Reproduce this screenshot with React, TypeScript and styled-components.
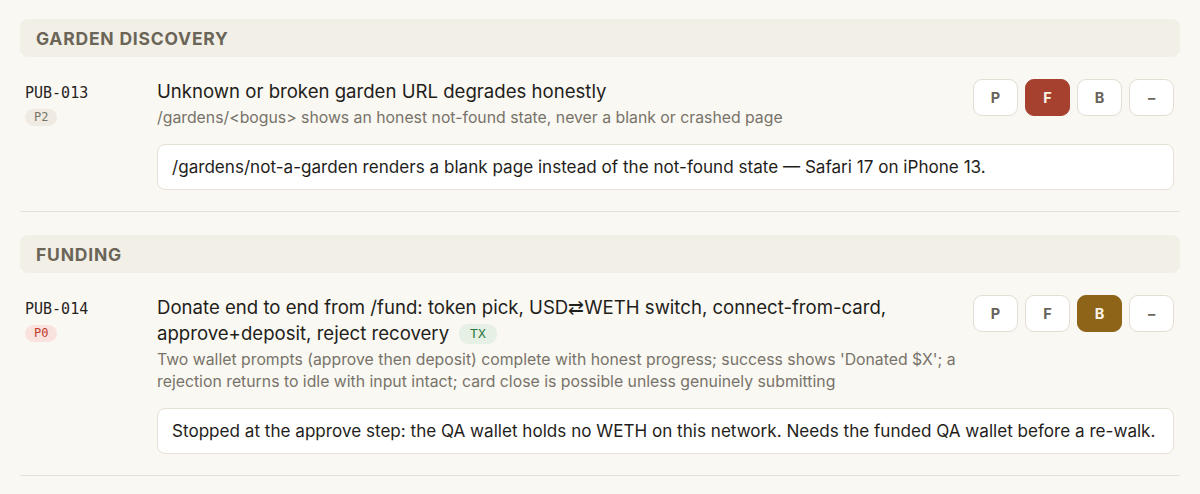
import styled, { createGlobalStyle } from 'styled-components';

type Verdict = 'P' | 'F' | 'B' | '–';

type Check = {
  id: string;
  priority: string;
  title: string;
  tag?: string;
  description: string;
  note: string;
  verdict: Verdict;
};

type Group = {
  name: string;
  checks: Check[];
};

const groups: Group[] = [
  {
    name: 'Garden Discovery',
    checks: [
      {
        id: 'PUB-013',
        priority: 'P2',
        title: 'Unknown or broken garden URL degrades honestly',
        description: '/gardens/<bogus> shows an honest not-found state, never a blank or crashed page',
        note: '/gardens/not-a-garden renders a blank page instead of the not-found state — Safari 17 on iPhone 13.',
        verdict: 'F',
      },
    ],
  },
  {
    name: 'Funding',
    checks: [
      {
        id: 'PUB-014',
        priority: 'P0',
        title:
          'Donate end to end from /fund: token pick, USD⇄WETH switch, connect-from-card, approve+deposit, reject recovery',
        tag: 'TX',
        description:
          "Two wallet prompts (approve then deposit) complete with honest progress; success shows 'Donated $X'; a rejection returns to idle with input intact; card close is possible unless genuinely submitting",
        note: 'Stopped at the approve step: the QA wallet holds no WETH on this network. Needs the funded QA wallet before a re-walk.',
        verdict: 'B',
      },
    ],
  },
];

const verdicts: Verdict[] = ['P', 'F', 'B', '–'];

export default function App() {
  return (
    <>
      <GlobalStyle />
      <Page>
        {groups.map((group) => (
          <Section key={group.name}>
            <SectionHeader>{group.name}</SectionHeader>
            {group.checks.map((check) => (
              <Row key={check.id}>
                <IdColumn>
                  <CheckId>{check.id}</CheckId>
                  <Priority $level={check.priority}>{check.priority}</Priority>
                </IdColumn>
                <Body>
                  <Top>
                    <Texts>
                      <Title>
                        {check.title}
                        {check.tag && <Tag>{check.tag}</Tag>}
                      </Title>
                      <Description>{check.description}</Description>
                    </Texts>
                    <Verdicts>
                      {verdicts.map((v) => (
                        <VerdictButton key={v} $verdict={v} $active={check.verdict === v}>
                          {v}
                        </VerdictButton>
                      ))}
                    </Verdicts>
                  </Top>
                  <Note>{check.note}</Note>
                </Body>
              </Row>
            ))}
          </Section>
        ))}
      </Page>
    </>
  );
}

const GlobalStyle = createGlobalStyle`
  html, body {
    margin: 0;
    background: #faf8f2;
  }
  body {
    font-family: Inter, "Noto Sans", sans-serif;
    color: #1f1e1b;
  }
`;

const Page = styled.div`
  padding: 19px 20px 0;
`;

const Section = styled.section`
  margin-bottom: 23px;
`;

const SectionHeader = styled.h2`
  margin: 0;
  height: 38px;
  display: flex;
  align-items: center;
  padding: 0 16px;
  border-radius: 8px;
  background: #f2efe7;
  color: #6b6557;
  font-size: 17.5px;
  font-weight: 700;
  letter-spacing: 0.045em;
  text-transform: uppercase;
`;

const Row = styled.div`
  display: grid;
  grid-template-columns: 137px 1fr;
  padding: 21px 6px 21px 0;
  border-bottom: 1px solid #e5e1d6;
`;

const IdColumn = styled.div`
  display: flex;
  flex-direction: column;
  align-items: flex-start;
  gap: 7px;
  padding: 7px 0 0 5px;
`;

const CheckId = styled.div`
  font-family: 'DejaVu Sans Mono', monospace;
  font-size: 15px;
  font-weight: 500;
  color: #26241f;
  line-height: 17px;
`;

const Priority = styled.span<{ $level: string }>`
  font-family: 'DejaVu Sans Mono', monospace;
  font-size: 12px;
  line-height: 17px;
  padding: 0 9px;
  border-radius: 9px;
  background: ${(p) => (p.$level === 'P0' ? '#fae3df' : '#efebe2')};
  color: ${(p) => (p.$level === 'P0' ? '#c0392b' : '#7a7568')};
`;

const Body = styled.div`
  display: flex;
  flex-direction: column;
  gap: 15px;
`;

const Top = styled.div`
  display: flex;
  align-items: flex-start;
  gap: 12px;
`;

const Texts = styled.div`
  flex: 1;
  min-width: 0;
`;

const Title = styled.div`
  font-size: 18.6px;
  line-height: 26px;
  color: #1f1e1b;
`;

const Tag = styled.span`
  display: inline-block;
  margin-left: 10px;
  padding: 0 11px;
  border-radius: 9px;
  background: #e6f0e4;
  color: #2e7a46;
  font-family: 'DejaVu Sans Mono', monospace;
  font-size: 13px;
  line-height: 20px;
  vertical-align: 2px;
`;

const Description = styled.div`
  margin-top: 3px;
  font-size: 15.8px;
  line-height: 22px;
  color: #77736a;
`;

const Verdicts = styled.div`
  display: flex;
  gap: 7px;
  padding-top: 1px;
`;

const activeColors: Record<string, string> = {
  F: '#a6412f',
  B: '#8e6419',
  P: '#3f7a46',
  '–': '#6b6557',
};

const VerdictButton = styled.button<{ $verdict: Verdict; $active: boolean }>`
  width: 45px;
  height: 37px;
  border-radius: 9px;
  border: 1px solid ${(p) => (p.$active ? activeColors[p.$verdict] : '#e3ded2')};
  background: ${(p) => (p.$active ? activeColors[p.$verdict] : '#ffffff')};
  color: ${(p) => (p.$active ? '#fbf4e6' : '#67625a')};
  font-family: Inter, sans-serif;
  font-size: 14.5px;
  font-weight: 700;
  cursor: pointer;
`;

const Note = styled.div`
  padding: 12px 14px;
  border: 1px solid #e5e1d6;
  border-radius: 8px;
  background: #ffffff;
  font-size: 17.1px;
  line-height: 20px;
  color: #1f1e1b;
`;
